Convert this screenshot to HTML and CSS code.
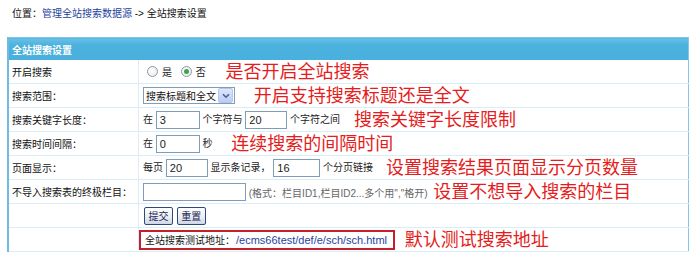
FILE: index.html
```html
<!DOCTYPE html>
<html lang="zh-CN">
<head>
  <meta charset="UTF-8">
  <meta name="viewport" content="width=device-width, initial-scale=1.0">
  <title>全站搜索设置</title>
  <link rel="stylesheet" href="styles.css">
</head>
<body>
  <div class="crumb">位置：<a href="#">管理全站搜索数据源</a> -&gt; 全站搜索设置</div>

  <table class="setform">
    <tr class="head">
      <td colspan="2">全站搜索设置</td>
    </tr>
    <tr>
      <td class="label">开启搜索</td>
      <td class="value">
        <span class="radio"></span><span class="opt">是</span>
        <span class="radio on"></span><span class="opt">否</span>
        <span class="note n1">是否开启全站搜索</span>
      </td>
    </tr>
    <tr>
      <td class="label">搜索范围：</td>
      <td class="value">
        <span class="select"><span class="seltext">搜索标题和全文</span><span class="arrow"><svg width="8" height="6" viewBox="0 0 8 6"><path d="M1 1.2 L4 4.2 L7 1.2" fill="none" stroke="#4d6185" stroke-width="1.6"/></svg></span></span>
        <span class="note n2">开启支持搜索标题还是全文</span>
      </td>
    </tr>
    <tr>
      <td class="label">搜索关键字长度：</td>
      <td class="value">
        在 <span class="field w44">3</span> 个字符与 <span class="field w42">20</span> 个字符之间
        <span class="note n3">搜索关键字长度限制</span>
      </td>
    </tr>
    <tr>
      <td class="label">搜索时间间隔：</td>
      <td class="value">
        在 <span class="field w44">0</span> 秒
        <span class="note n4">连续搜索的间隔时间</span>
      </td>
    </tr>
    <tr>
      <td class="label">页面显示：</td>
      <td class="value">
        每页 <span class="field w42">20</span> 显示条记录， <span class="field w47">16</span> 个分页链接
        <span class="note n5">设置搜索结果页面显示分页数量</span>
      </td>
    </tr>
    <tr>
      <td class="label">不导入搜索表的终极栏目：</td>
      <td class="value">
        <span class="field w103"></span>
        <span class="hint">(格式：栏目ID1,栏目ID2...多个用","格开)</span>
        <span class="note n6">设置不想导入搜索的栏目</span>
      </td>
    </tr>
    <tr>
      <td class="label"></td>
      <td class="value">
        <button class="btn">提交</button>
        <button class="btn">重置</button>
      </td>
    </tr>
    <tr>
      <td class="label"></td>
      <td class="value addr">
        <span class="addrbox">全站搜索测试地址：<a href="#">/ecms66test/def/e/sch/sch.html</a></span>
        <span class="note n7">默认测试搜索地址</span>
      </td>
    </tr>
  </table>
</body>
</html>
```

FILE: styles.css
```css
body {
  margin: 0;
  padding: 0 11px 0 7px;
  font-family: "Liberation Sans", "Noto Sans CJK SC", sans-serif;
  font-size: 10px;
  color: #111;
  background: #fff;
}
a { text-decoration: none; }

.crumb {
  padding: 8px 0 0 5px;
  line-height: 12px;
  margin-bottom: 17px;
  color: #111;
}
.crumb a { color: #1e3f9e; }

.setform {
  width: 682px;
  border-collapse: collapse;
  border: 1px solid #86c6e6;
  border-left: 2px solid #6fbbe2;
}
.setform td {
  height: 23px;
  padding: 0;
  border-bottom: 1px solid #d9edf7;
  white-space: nowrap;
}
.head td {
  height: 22px;
  padding-left: 3px;
  background: linear-gradient(#68c0e6, #4cb1dd 30%, #49afdc);
  color: #fff;
  font-weight: bold;
  border-bottom: none;
}
.label {
  width: 126px;
  padding-left: 3px !important;
  border-right: 1px solid #dcedf6;
  color: #111;
}
.value {
  padding-left: 4px !important;
  color: #222;
}
.value > * { vertical-align: middle; }

.radio {
  display: inline-block;
  width: 9px;
  height: 9px;
  margin: 0 4px 0 4px;
  border: 1px solid #8c9aa6;
  border-radius: 50%;
  background: radial-gradient(circle at 40% 40%, #fff, #e4e8ec);
  position: relative;
}
.radio.on { margin-left: 5px; }
.radio.on::after {
  content: "";
  position: absolute;
  left: 2px;
  top: 2px;
  width: 5px;
  height: 5px;
  border-radius: 50%;
  background: #3aa64a;
}
.opt { margin-right: 1px; }

.select {
  display: inline-flex;
  align-items: center;
  box-sizing: border-box;
  width: 92px;
  height: 17px;
  padding: 0 1px 0 2px;
  border: 1px solid #7f9db9;
  background: #fff;
  color: #111;
}
.seltext { flex: 1; }
.arrow {
  display: inline-flex;
  align-items: center;
  justify-content: center;
  width: 13px;
  height: 13px;
  border: 1px solid #b6c7ea;
  border-radius: 2px;
  background: linear-gradient(#dce6fb, #b9cdf6);
}

.field {
  display: inline-block;
  box-sizing: border-box;
  height: 18px;
  line-height: 16px;
  padding-left: 3px;
  border: 1px solid #7f9db9;
  background: #fff;
  color: #222;
  font-size: 11px;
}
.w42 { width: 42px; }
.w44 { width: 44px; }
.w47 { width: 47px; }
.w103 { width: 103px; }

.hint { color: #666; }

.btn {
  box-sizing: border-box;
  height: 18px;
  width: 29px;
  padding: 0;
  margin: 0 0 0 1px;
  font: 10px "Liberation Sans", "Noto Sans CJK SC", sans-serif;
  color: #1b2a5a;
  border: 1px solid #2d4a7c;
  border-radius: 2px;
  background: linear-gradient(#ffffff, #e9ecf2 60%, #cfd6e4);
  vertical-align: middle;
}

.addr { padding-left: 0 !important; }
.addrbox {
  display: inline-block;
  box-sizing: border-box;
  height: 20px;
  line-height: 16px;
  padding: 0 6px 0 4px;
  border: 2px solid #c4202c;
  color: #111;
}
.addrbox a { color: #1f3f9f; margin-left: 1px; font-size: 11px; }

.note {
  font-size: 18px;
  line-height: 20px;
  color: #e51c20;
}
.n1 { margin-left: 16px; }
.n2 { margin-left: 16px; }
.n3 { margin-left: 11px; }
.n4 { margin-left: 16px; }
.n5 { margin-left: 10px; }
.n6 { margin-left: 3px; }
.n7 { margin-left: 7px; }
```
